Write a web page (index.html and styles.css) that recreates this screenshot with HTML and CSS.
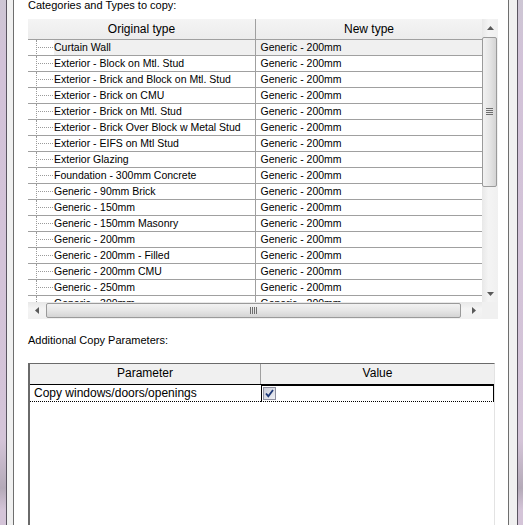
FILE: index.html
```html
<!DOCTYPE html>
<html>
<head>
<meta charset="utf-8">
<link rel="stylesheet" href="styles.css">
</head>
<body>
<div class="window">
  <div class="frame">
    <div class="panel">
      <div class="label first">Categories and Types to copy:</div>
      <div class="list">
        <div class="list-main">
          <div class="list-head">
            <div class="hcell c1">Original type</div>
            <div class="hcell c2">New type</div>
          </div>
          <div class="row sel"><div class="cell c1"><span class="tree"></span><span class="txt">Curtain Wall</span></div><div class="cell c2">Generic - 200mm</div></div>
          <div class="row"><div class="cell c1"><span class="tree"></span><span class="txt">Exterior - Block on Mtl. Stud</span></div><div class="cell c2">Generic - 200mm</div></div>
          <div class="row"><div class="cell c1"><span class="tree"></span><span class="txt">Exterior - Brick and Block on Mtl. Stud</span></div><div class="cell c2">Generic - 200mm</div></div>
          <div class="row"><div class="cell c1"><span class="tree"></span><span class="txt">Exterior - Brick on CMU</span></div><div class="cell c2">Generic - 200mm</div></div>
          <div class="row"><div class="cell c1"><span class="tree"></span><span class="txt">Exterior - Brick on Mtl. Stud</span></div><div class="cell c2">Generic - 200mm</div></div>
          <div class="row"><div class="cell c1"><span class="tree"></span><span class="txt">Exterior - Brick Over Block w Metal Stud</span></div><div class="cell c2">Generic - 200mm</div></div>
          <div class="row"><div class="cell c1"><span class="tree"></span><span class="txt">Exterior - EIFS on Mtl Stud</span></div><div class="cell c2">Generic - 200mm</div></div>
          <div class="row"><div class="cell c1"><span class="tree"></span><span class="txt">Exterior Glazing</span></div><div class="cell c2">Generic - 200mm</div></div>
          <div class="row"><div class="cell c1"><span class="tree"></span><span class="txt">Foundation - 300mm Concrete</span></div><div class="cell c2">Generic - 200mm</div></div>
          <div class="row"><div class="cell c1"><span class="tree"></span><span class="txt">Generic - 90mm Brick</span></div><div class="cell c2">Generic - 200mm</div></div>
          <div class="row"><div class="cell c1"><span class="tree"></span><span class="txt">Generic - 150mm</span></div><div class="cell c2">Generic - 200mm</div></div>
          <div class="row"><div class="cell c1"><span class="tree"></span><span class="txt">Generic - 150mm Masonry</span></div><div class="cell c2">Generic - 200mm</div></div>
          <div class="row"><div class="cell c1"><span class="tree"></span><span class="txt">Generic - 200mm</span></div><div class="cell c2">Generic - 200mm</div></div>
          <div class="row"><div class="cell c1"><span class="tree"></span><span class="txt">Generic - 200mm - Filled</span></div><div class="cell c2">Generic - 200mm</div></div>
          <div class="row"><div class="cell c1"><span class="tree"></span><span class="txt">Generic - 200mm CMU</span></div><div class="cell c2">Generic - 200mm</div></div>
          <div class="row"><div class="cell c1"><span class="tree"></span><span class="txt">Generic - 250mm</span></div><div class="cell c2">Generic - 200mm</div></div>
          <div class="row"><div class="cell c1"><span class="tree"></span><span class="txt">Generic - 300mm</span></div><div class="cell c2">Generic - 200mm</div></div>
        </div>
        <div class="vscroll">
          <div class="sbtn">
            <svg width="7" height="4" viewBox="0 0 7 4"><path d="M0 4 L3.5 0 L7 4 Z" fill="#5a5a5a"/></svg>
          </div>
          <div class="vthumb">
            <svg width="7" height="8" viewBox="0 0 7 8"><path d="M0 0.5H7M0 2.5H7M0 4.5H7M0 6.5H7" stroke="#6e6e6e" stroke-width="1"/></svg>
          </div>
          <div class="vtrack"></div>
          <div class="sbtn">
            <svg width="7" height="4" viewBox="0 0 7 4"><path d="M0 0 L3.5 4 L7 0 Z" fill="#5a5a5a"/></svg>
          </div>
        </div>
        <div class="hscroll">
          <div class="sbtn h">
            <svg width="4" height="7" viewBox="0 0 4 7"><path d="M4 0 L0 3.5 L4 7 Z" fill="#5a5a5a"/></svg>
          </div>
          <div class="hthumb">
            <svg width="8" height="7" viewBox="0 0 8 7"><path d="M0.5 0V7M2.5 0V7M4.5 0V7M6.5 0V7" stroke="#6e6e6e" stroke-width="1"/></svg>
          </div>
          <div class="htrack"></div>
          <div class="sbtn h">
            <svg width="4" height="7" viewBox="0 0 4 7"><path d="M0 0 L4 3.5 L0 7 Z" fill="#5a5a5a"/></svg>
          </div>
        </div>
        <div class="corner"></div>
      </div>
      <div class="label second">Additional Copy Parameters:</div>
      <div class="grid">
        <div class="grid-head">
          <div class="ghcell p">Parameter</div>
          <div class="ghcell v">Value</div>
        </div>
        <div class="grow">
          <div class="gcell p">Copy windows/doors/openings</div>
          <div class="gcell v">
            <span class="check">
              <svg width="11" height="11" viewBox="0 0 11 11"><path d="M2 5.5 L4.3 8.2 L9 2" fill="none" stroke="#1f3a78" stroke-width="1.8"/></svg>
            </span>
          </div>
        </div>
      </div>
    </div>
  </div>
</div>
</body>
</html>
```

FILE: styles.css
```css
html, body {
  margin: 0;
  padding: 0;
  width: 523px;
  height: 525px;
  overflow: hidden;
  background: #d4c4d8;
}

.window {
  box-sizing: border-box;
  width: 523px;
  height: 525px;
  padding: 0 5px 0 6px;
  background: linear-gradient(to bottom, #cdc6d4 0px, #d2c2d8 60px, #d4c4d8 440px, #b4aab8 488px, #d4c4d8 510px);
}

.frame {
  box-sizing: border-box;
  height: 100%;
  border-left: 1px solid #5a5560;
  border-right: 1px solid #5a5560;
  background: #f0f0f0;
  padding: 0 8px 0 6px;
}

.panel {
  box-sizing: border-box;
  height: 100%;
  border-left: 1px solid #6e6e6e;
  border-right: 1px solid #6e6e6e;
  background: #ffffff;
  padding-left: 14px;
  overflow: hidden;
  font-family: "Liberation Sans", Arial, sans-serif;
  color: #000;
}

.label {
  font-size: 11px;
  line-height: 13px;
  height: 13px;
  white-space: nowrap;
}

.label.first {
  margin-top: -1px;
}

.label.second {
  margin-top: 15px;
}

/* ---------- upper list ---------- */
.list {
  margin-top: 7px;
  width: 470px;
  display: grid;
  grid-template-columns: 454px 16px;
  grid-template-rows: 283px 17px;
}

.list-main {
  overflow: hidden;
  background: #fff;
}

.list-head {
  display: flex;
  height: 20px;
  border-bottom: 1px solid #a0a0a0;
  background: linear-gradient(to bottom, #f4f4f4, #ececec);
  font-size: 12px;
  line-height: 20px;
}

.hcell {
  text-align: center;
  white-space: nowrap;
}

.hcell.c1, .cell.c1 {
  width: 227px;
  border-right: 1px solid #a0a0a0;
}

.hcell.c2 {
  width: 226px;
}

.row {
  display: flex;
  height: 15px;
  border-bottom: 1px solid #a0a0a0;
  font-size: 10.5px;
  line-height: 15px;
}

.cell {
  white-space: nowrap;
  overflow: hidden;
}

.cell.c1 {
  display: flex;
  align-items: stretch;
}

.cell.c2 {
  padding-left: 5px;
  box-sizing: border-box;
  width: 227px;
}

.row.sel .txt, .row.sel .cell.c2 {
  background: #f0f0f0;
}

.tree {
  flex: none;
  width: 17px;
  margin-left: 8px;
  margin-bottom: -1px;
  border-left: 1px dotted #9a9a9a;
  background: repeating-linear-gradient(90deg, #9a9a9a 0 1px, transparent 1px 2px) no-repeat 1px 7px / 15px 1px;
}

.txt {
  flex: 1;
}

/* ---------- scrollbars ---------- */
.vscroll {
  display: flex;
  flex-direction: column;
  background: linear-gradient(to right, #e8e8e8, #f4f4f4 40%, #f0f0f0);
  grid-row: 1;
  grid-column: 2;
}

.sbtn {
  flex: none;
  height: 17px;
  display: flex;
  align-items: center;
  justify-content: center;
}

.sbtn.h {
  height: auto;
  width: 17px;
}

.vthumb {
  flex: none;
  height: 150px;
  margin: 1px 1px 0 0;
  border: 1px solid #9a9a9a;
  border-radius: 2px;
  box-sizing: border-box;
  background: linear-gradient(to right, #f2f2f2, #e6e6e6 50%, #d4d4d4);
  display: flex;
  align-items: center;
  justify-content: center;
}

.vtrack {
  flex: 1;
}

.hscroll {
  display: flex;
  background: linear-gradient(to bottom, #e8e8e8, #f4f4f4 40%, #f0f0f0);
  grid-row: 2;
  grid-column: 1;
}

.hthumb {
  flex: none;
  width: 415px;
  margin: 1px 0 1px 1px;
  border: 1px solid #9a9a9a;
  border-radius: 2px;
  box-sizing: border-box;
  background: linear-gradient(to bottom, #f2f2f2, #e6e6e6 50%, #d4d4d4);
  display: flex;
  align-items: center;
  justify-content: center;
}

.htrack {
  flex: 1;
}

.corner {
  grid-row: 2;
  grid-column: 2;
  background: #f0f0f0;
}

/* ---------- lower grid ---------- */
.grid {
  margin-top: 16px;
  width: 467px;
  height: 200px;
  box-sizing: border-box;
  border-top: 1px solid #6a6a6a;
  border-left: 2px solid #6a6a6a;
  border-right: 1px solid #e3e3e3;
  background: #fff;
}

.grid-head {
  display: flex;
  height: 20px;
  border-bottom: 1px solid #000;
  background: #f0f0f0;
  font-size: 12px;
  line-height: 19px;
}

.ghcell {
  text-align: center;
  white-space: nowrap;
}

.ghcell.p {
  width: 230px;
  border-right: 1px solid #a0a0a0;
}

.ghcell.v {
  flex: 1;
}

.grow {
  display: flex;
  height: 17px;
  font-size: 12px;
  line-height: 16px;
}

.gcell {
  box-sizing: border-box;
  white-space: nowrap;
}

.gcell.p {
  padding-left: 4px;
  width: 231px;
  border-bottom: 1px dotted #000;
}

.gcell.v {
  width: 233px;
  border: 1px solid #000;
  border-bottom: 1px dotted #000;
  padding: 1px 0 0 1px;
}

.check {
  display: block;
  width: 13px;
  height: 13px;
  box-sizing: border-box;
  border: 1px solid #8e8f9f;
  background: linear-gradient(135deg, #c9cbd6, #eef0f5);
}

.check svg {
  display: block;
  margin: 0;
}
```
